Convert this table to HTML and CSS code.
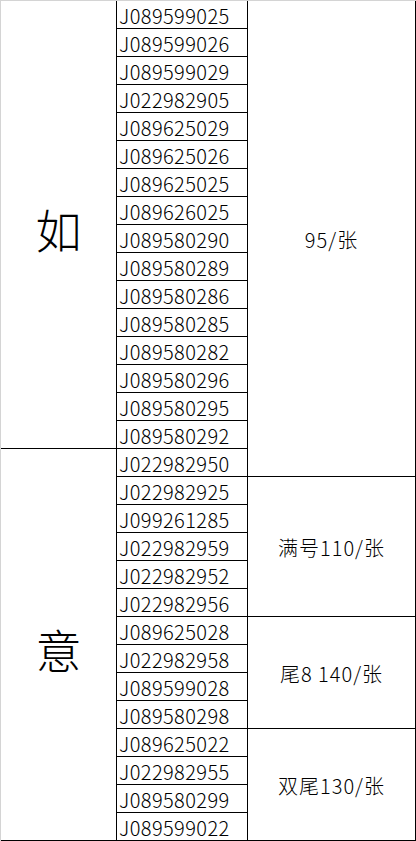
FILE: index.html
```html
<!DOCTYPE html>
<html lang="zh">
<head>
<meta charset="utf-8">
<title>号码表</title>
<link rel="stylesheet" href="styles.css">
</head>
<body>
<div class="sheet">
  <div class="col col-name">
    <div class="grp g16"><span class="big">如</span></div>
    <div class="grp g14"><span class="big">意</span></div>
  </div>
  <div class="col col-id">
    <div class="id">J089599025</div>
    <div class="id">J089599026</div>
    <div class="id">J089599029</div>
    <div class="id">J022982905</div>
    <div class="id">J089625029</div>
    <div class="id">J089625026</div>
    <div class="id">J089625025</div>
    <div class="id">J089626025</div>
    <div class="id">J089580290</div>
    <div class="id">J089580289</div>
    <div class="id">J089580286</div>
    <div class="id">J089580285</div>
    <div class="id">J089580282</div>
    <div class="id">J089580296</div>
    <div class="id">J089580295</div>
    <div class="id">J089580292</div>
    <div class="id">J022982950</div>
    <div class="id">J022982925</div>
    <div class="id">J099261285</div>
    <div class="id">J022982959</div>
    <div class="id">J022982952</div>
    <div class="id">J022982956</div>
    <div class="id">J089625028</div>
    <div class="id">J022982958</div>
    <div class="id">J089599028</div>
    <div class="id">J089580298</div>
    <div class="id">J089625022</div>
    <div class="id">J022982955</div>
    <div class="id">J089580299</div>
    <div class="id">J089599022</div>
  </div>
  <div class="col col-price">
    <div class="grp g17"><span class="price">95/张</span></div>
    <div class="grp g5"><span class="price">满号110/张</span></div>
    <div class="grp g4"><span class="price">尾8 140/张</span></div>
    <div class="grp g4"><span class="price">双尾130/张</span></div>
  </div>
</div>
</body>
</html>
```

FILE: styles.css
```css
html, body {
  margin: 0;
  padding: 0;
  background: #ffffff;
}

.sheet {
  display: flex;
  width: 416px;
  height: 841px;
  box-sizing: border-box;
  border-top: 1px solid #d4d4d4;
  border-left: 1px solid #d4d4d4;
  font-family: "Noto Sans CJK SC", "Noto Sans", sans-serif;
  color: #000000;
  overflow: hidden;
}

.col {
  display: flex;
  flex-direction: column;
  box-sizing: border-box;
  border-right: 1px solid #000000;
}

.col-name { width: 116px; }
.col-id { width: 131px; }
.col-price { width: 168px; }

.grp {
  box-sizing: border-box;
  border-bottom: 1px solid #000000;
  display: flex;
  align-items: center;
  justify-content: center;
}

.g17 { height: 476px; }
.g16 { height: 448px; }
.g14 { height: 392px; }
.g5 { height: 140px; }
.g4 { height: 112px; }

.id {
  box-sizing: border-box;
  height: 28px;
  border-bottom: 1px solid #000000;
  padding: 3px 0 0 2px;
  font-size: 20px;
  font-weight: 300;
  letter-spacing: 0.4px;
  line-height: 24px;
  white-space: nowrap;
}

.big {
  font-size: 46px;
  font-weight: 300;
  line-height: 1;
  padding-top: 6px;
}

.price {
  font-size: 20px;
  font-weight: 300;
  letter-spacing: 1px;
  line-height: 1;
  padding-top: 3px;
  white-space: pre;
}
```
